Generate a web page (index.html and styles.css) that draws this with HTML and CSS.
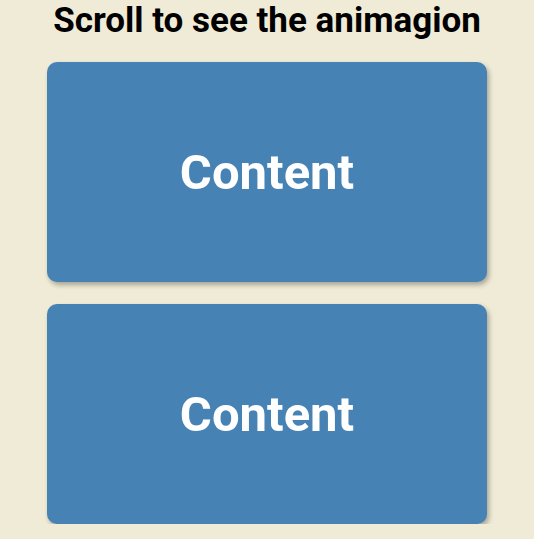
FILE: index.html
```html
<!DOCTYPE html>
<html>
<head>
<meta charset="utf-8">
<link rel="stylesheet" href="styles.css">
</head>
<body>
<h1 class="title">Scroll to see the animagion</h1>
<div class="list">
  <div class="box"><h2 class="label">Content</h2></div>
  <div class="box"><h2 class="label">Content</h2></div>
</div>
</body>
</html>
```
FILE: styles.css
```css
html, body {
  margin: 0;
  padding: 0;
}
body {
  background: #efebd6;
  font-family: Roboto, "Liberation Sans", sans-serif;
  display: flex;
  flex-direction: column;
  align-items: center;
}
.title {
  margin: 0 0 21px;
  font-size: 35px;
  font-weight: 700;
  color: #000;
  line-height: 41px;
}
.list {
  display: flex;
  flex-direction: column;
  gap: 22px;
}
.box {
  width: 440px;
  height: 220px;
  background: #4682b4;
  border-radius: 10px;
  box-shadow: 2px 3px 5px rgba(0, 0, 0, 0.3);
  display: flex;
  align-items: center;
  justify-content: center;
}
.label {
  margin: 0;
  color: #fff;
  font-size: 49px;
  font-weight: 700;
}
```
